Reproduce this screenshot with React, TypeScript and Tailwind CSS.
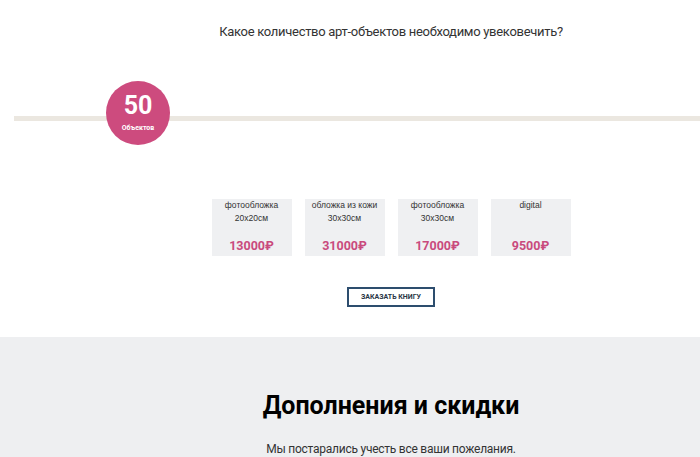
// Калькулятор тиража: слайдер количества, варианты обложек и блок скидок.

const covers = [
  { title: "фотообложка", size: "20x20см", price: "13000₽" },
  { title: "обложка из кожи", size: "30x30см", price: "31000₽" },
  { title: "фотообложка", size: "30x30см", price: "17000₽" },
  { title: "digital", size: "", price: "9500₽" },
];

export default function App() {
  return (
    <div className="w-[700px] h-[457px] overflow-hidden bg-white font-['Roboto',sans-serif]">
      <section className="h-[337px] pt-[22px]">
        <p className="pl-[82px] text-center text-[13px] leading-[20px] tracking-[-0.3px] text-[#333]">
          Какое количество арт-объектов необходимо увековечить?
        </p>

        {/* слайдер: трек на всю ширину, ползунок поверх */}
        <div className="relative ml-[14px] mt-[39px] h-[64px]">
          <div className="absolute left-0 right-0 top-[35px] h-[5px] bg-[#ebe7e0]" />
          <div className="absolute left-[92px] top-0 flex h-[64px] w-[64px] flex-col items-center rounded-full bg-[#cd4b7e] text-white">
            <span className="mt-[10px] text-[25px] font-bold leading-[30px]">50</span>
            <span className="mt-[3px] text-[7px] font-bold leading-[9px]">Объектов</span>
          </div>
        </div>

        <div className="mt-[54px] flex justify-center gap-[13px] pl-[82px]">
          {covers.map((c, i) => (
            <div
              key={i}
              className="flex h-[57px] w-[80px] flex-col items-center justify-between bg-[#eff0f2] pb-[2px]"
            >
              <div className="text-center font-['Liberation_Sans',sans-serif] text-[8.5px] leading-[13px] text-[#333]">
                <div>{c.title}</div>
                {c.size && <div>{c.size}</div>}
              </div>
              <div className="text-[12.5px] font-bold leading-[16px] text-[#c94a7d]">{c.price}</div>
            </div>
          ))}
        </div>

        <div className="mt-[31px] flex justify-center pl-[82px]">
          <button
            type="button"
            className="h-[20px] w-[88px] border-2 border-[#2d4d6e] text-[7px] font-bold uppercase leading-none text-[#2a3645]"
          >
            Заказать книгу
          </button>
        </div>
      </section>

      <section className="h-[120px] bg-[#eeeff1] pl-[82px] pt-[54px] text-center">
        <h2 className="text-[25px] font-bold leading-[30px] text-black">Дополнения и скидки</h2>
        <p className="mt-[19px] text-[12px] leading-[18px] tracking-[-0.25px] text-[#333]">
          Мы постарались учесть все ваши пожелания.
        </p>
      </section>
    </div>
  );
}
